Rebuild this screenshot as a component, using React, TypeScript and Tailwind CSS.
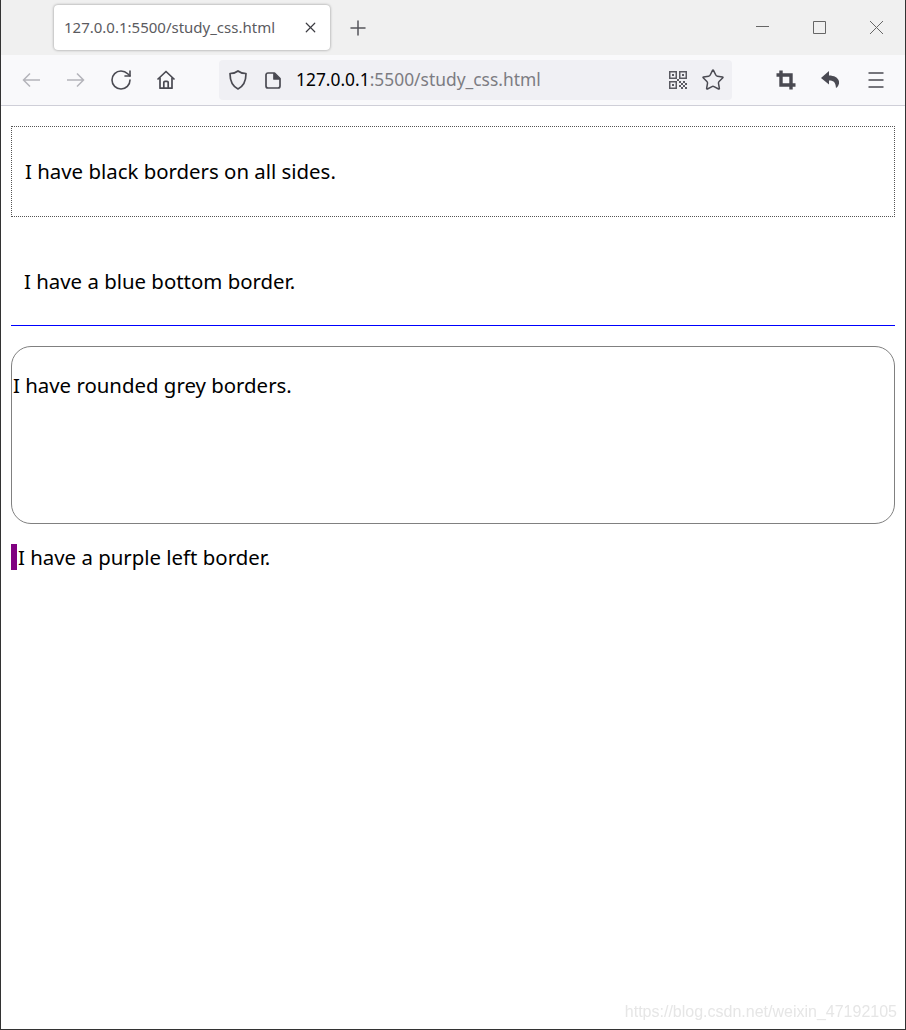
import React from 'react';
import { Plus, RotateCw, Star, X } from 'lucide-react';

const uiFont = "font-['Noto_Sans',sans-serif]";

const BackArrow = ({ flip }: { flip?: boolean }) => (
  <svg width="18" height="16" viewBox="0 0 18 16" fill="none" stroke="#b4b4ba" strokeWidth="1.5" className={flip ? 'scale-x-[-1]' : ''}>
    <path d="M18 8H1.500M8 1.500 1.500 8 8 14.500" />
  </svg>
);

const ShieldIcon = () => (
  <svg width="18" height="20" viewBox="0 0 18 20" fill="none" stroke="#4a4a52" strokeWidth="1.700" strokeLinejoin="round">
    <path d="M9 1c2.500 2 5 2.500 8 2.500C17 11 15 16 9 19 3 16 1 11 1 3.500 4 3.500 6.500 3 9 1z" />
  </svg>
);

const FileIcon = () => (
  <svg width="16" height="17" viewBox="0 0 16 17" fill="none" stroke="#4a4a52" strokeWidth="1.700" strokeLinejoin="round">
    <path d="M3 1h6.500L15 6.500V14a2 2 0 0 1-2 2H3a2 2 0 0 1-2-2V3a2 2 0 0 1 2-2z" />
    <path d="M9 1v6h6" fill="#4a4a52" />
  </svg>
);

const QrIcon = () => (
  <svg width="18" height="18" viewBox="0 0 18 18" fill="#5a5a62">
    <path fillRule="evenodd" d="M0 0h8v8H0zM1.500 1.500v5h5v-5zM10 0h8v8h-8zM11.500 1.500v5h5v-5zM0 10h8v8H0zM1.500 11.500v5h5v-5z" />
    <path d="M3 3h2v2H3zM13 3h2v2h-2zM3 13h2v2H3zM8 8h2v2H8zM10 10h2v2h-2zM14 10h2v2h-2zM12 12h2v2h-2zM16 12h2v2h-2zM10 14h2v2h-2zM14 14h2v2h-2zM12 16h2v2h-2zM16 16h2v2h-2z" />
  </svg>
);

const CropIcon = () => (
  <svg width="20" height="20" viewBox="0 0 20 20" fill="none" stroke="#4a4a52" strokeWidth="3.400">
    <path d="M0.500 5H15V19.500" />
    <path d="M5 0.500V15H19.500" />
  </svg>
);

const ReplyIcon = () => (
  <svg width="20" height="20" viewBox="0 0 20 20" fill="#4a4a52">
    <path d="M8 1 0 8l8 6.500V10.500c4 0 6.500 1 7 7.500 2-1 3.500-4 3-6.500C17.200 7.500 13 5.500 8 5.500z" />
  </svg>
);

const HomeIcon = () => (
  <svg width="20" height="20" viewBox="0 0 20 20" fill="none" stroke="#4a4a52" strokeWidth="1.700" strokeLinejoin="round">
    <path d="M1.500 9.500 10 1.500l8.500 8" />
    <path d="M4 7.500V18.200h12V7.500" />
    <path d="M7.800 18.200V12.500a1.200 1.200 0 0 1 1.200-1.200h2a1.200 1.200 0 0 1 1.200 1.200v5.700" />
  </svg>
);

const MenuIcon = () => (
  <svg width="16" height="16" viewBox="0 0 16 16" stroke="#4a4a52" strokeWidth="1.500" className="ml-[2px]">
    <path d="M0.500 1h15M0.500 8h15M0.500 15h15" />
  </svg>
);

const Toolbar = () => (
  <div className="h-[51px] shrink-0 flex items-center bg-[#f9f9fb] border-b border-[#cfcfd8]">
    <div className="w-[218px] shrink-0 flex items-center">
      <div className="ml-[21px]"><BackArrow /></div>
      <div className="ml-[27px]"><BackArrow flip /></div>
      <RotateCw className="ml-[24px] text-[#4a4a52]" size={24} strokeWidth={1.600} />
      <div className="ml-[23px]"><HomeIcon /></div>
    </div>
    <div className="w-[513px] h-10 shrink-0 flex items-center rounded bg-[#f0f0f4]">
      <div className="ml-[10px]"><ShieldIcon /></div>
      <div className="ml-[18px]"><FileIcon /></div>
      <div className={`ml-[15px] flex-1 text-[17.400px] leading-none text-[#7c7c82] ${uiFont}`}>
        <span className="text-black">127.0.0.1</span>:5500/study_css.html
      </div>
      <QrIcon />
      <Star className="ml-[14px] mr-[7px] text-[#4a4a52]" size={24} strokeWidth={1.500} />
    </div>
    <div className="ml-[44px] flex items-center gap-[25px]">
      <CropIcon />
      <ReplyIcon />
      <MenuIcon />
    </div>
  </div>
);

const WindowControls = () => (
  <div className="ml-auto mr-[22px] pt-[21px] flex items-start gap-[44px]">
    <svg width="13" height="13" viewBox="0 0 13 13" stroke="#666"><path d="M0 5.500h13" /></svg>
    <svg width="13" height="13" viewBox="0 0 13 13" stroke="#666" fill="none"><path d="M0.500 0.500h12v12h-12z" /></svg>
    <svg width="13" height="13" viewBox="0 0 13 13" stroke="#666" fill="none"><path d="M0 0l13 13M13 0 0 13" /></svg>
  </div>
);

const TabStrip = () => (
  <div className="h-[55px] shrink-0 flex bg-[#f0f0f0]">
    <div className={`ml-[53px] mt-[5px] w-[276px] h-[45px] flex items-center justify-between pl-[10px] pr-[11px] rounded bg-white shadow-[0_0_3px_rgba(0,0,0,0.4)] text-[15px] text-[#5b5b5f] ${uiFont}`}>
      <span>127.0.0.1:5500/study_css.html</span>
      <X className="text-[#3c3c42]" size={17} strokeWidth={1.700} />
    </div>
    <Plus className="ml-[16px] mt-[16px] text-[#55555b]" size={24} strokeWidth={1.500} />
    <WindowControls />
  </div>
);

export default function App() {
  return (
    <div className="relative w-[906px] h-[1030px] flex flex-col bg-white border-l border-r border-b border-[#333]">
      <TabStrip />
      <Toolbar />
      <div className={`flex flex-col gap-5 px-[10px] pt-5 text-[20.400px] leading-[26px] text-black ${uiFont}`}>
        <p className="h-[91px] flex items-center px-[13px] pb-[2px] border border-dotted border-[#555]">I have black borders on all sides.</p>
        <p className="h-[89px] flex items-center px-[13px] border-b border-[#0000ff]">I have a blue bottom border.</p>
        <p className="h-[178px] pt-[25px] pl-px border border-[#808080] rounded-[20px]">I have rounded grey borders.</p>
        <p className="pl-px border-l-[6px] border-[#800080]">I have a purple left border.</p>
      </div>
      <span className="absolute right-[8px] bottom-[7px] text-[16px] leading-5 text-[#e6e6e6] font-['Liberation_Sans',sans-serif] blur-[0.4px]">
        https://blog.csdn.net/weixin_47192105
      </span>
    </div>
  );
}
